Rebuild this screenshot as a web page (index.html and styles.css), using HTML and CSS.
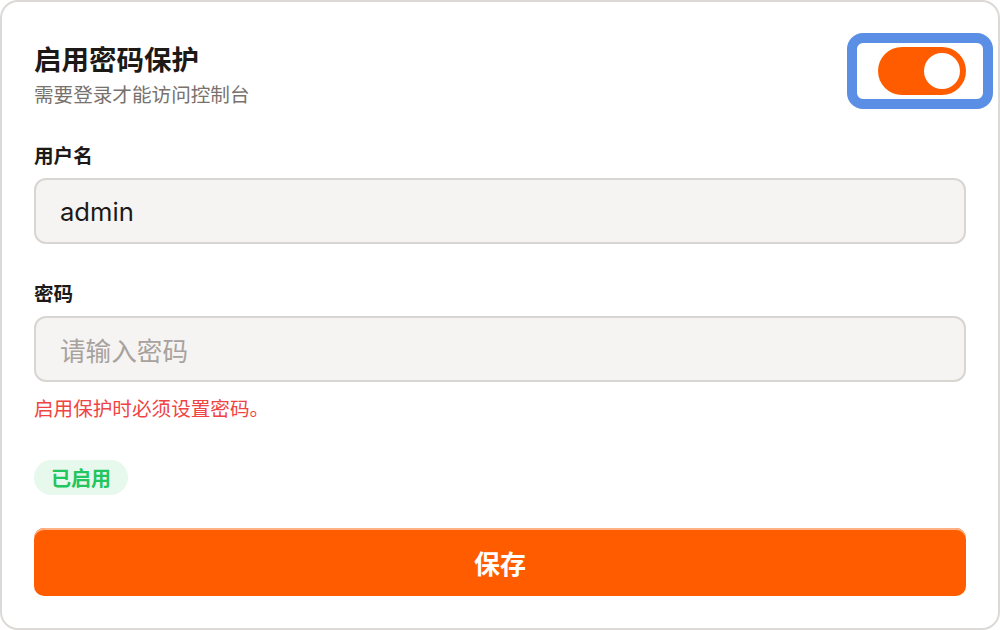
FILE: index.html
```html
<!DOCTYPE html>
<html lang="zh-CN">
<head>
<meta charset="utf-8">
<title>启用密码保护</title>
<link rel="stylesheet" href="styles.css">
</head>
<body>
<div class="card">
  <div class="header">
    <div class="heading">
      <div class="title">启用密码保护</div>
      <div class="subtitle">需要登录才能访问控制台</div>
    </div>
    <button class="toggle is-on is-focused" type="button" aria-pressed="true"><span class="knob"></span></button>
  </div>

  <div class="field field-first">
    <div class="label">用户名</div>
    <div class="input">admin</div>
  </div>

  <div class="field">
    <div class="label">密码</div>
    <div class="input placeholder">请输入密码</div>
    <div class="error">启用保护时必须设置密码。</div>
  </div>

  <div class="status"><span class="badge">已启用</span></div>

  <button class="save" type="button">保存</button>
</div>
</body>
</html>
```

FILE: styles.css
```css
* { box-sizing: border-box; }
html, body { margin: 0; padding: 0; background: #ffffff; }
body {
  font-family: "Noto Sans CJK SC", sans-serif;
  color: #1c1917;
}
.card {
  width: 1000px;
  height: 630px;
  border: 2px solid #dcd9d6;
  border-radius: 18px;
  background: #ffffff;
  padding: 36px 32px 32px 32px;
  display: flex;
  flex-direction: column;
}
.header {
  display: flex;
  justify-content: space-between;
  align-items: flex-start;
  flex: none;
}
.title {
  font-size: 27.5px;
  font-weight: 700;
  line-height: 40px;
  color: #1c1917;
}
.subtitle {
  margin-top: 2px;
  font-size: 19.6px;
  line-height: 28px;
  color: #78716c;
}
.toggle {
  position: relative;
  flex: none;
  width: 88px;
  height: 48px;
  border: none;
  border-radius: 24px;
  background: #ff5c00;
  padding: 0 6px 0 0;
  margin: 9px 0 0 0;
  display: flex;
  align-items: center;
  justify-content: flex-end;
}
.toggle .knob {
  width: 36px;
  height: 36px;
  border-radius: 50%;
  background: #ffffff;
}
.toggle.is-focused::after {
  content: "";
  position: absolute;
  top: -14px;
  bottom: -14px;
  left: -31px;
  right: -27px;
  border: 10px solid #5b8fe6;
  border-radius: 16px;
}
.field { display: flex; flex-direction: column; flex: none; }
.field-first { margin-top: 33px; }
.field + .field { margin-top: 35px; }
.label {
  font-size: 19.6px;
  font-weight: 700;
  line-height: 28px;
  color: #1c1917;
}
.input {
  margin-top: 9px;
  height: 66px;
  border: 2px solid #d8d5d2;
  border-radius: 12px;
  background: #f5f4f2;
  padding: 0 24px;
  display: flex;
  align-items: center;
  font-family: Inter, "Noto Sans CJK SC", sans-serif;
  font-size: 25.6px;
  color: #1c1917;
}
.input.placeholder { color: #a8a29e; }
.error {
  margin-top: 12px;
  font-size: 19.6px;
  line-height: 28px;
  color: #ef4444;
}
.status { margin-top: 38px; display: flex; flex: none; }
.badge {
  height: 35px;
  padding: 0 17px;
  border-radius: 18px;
  background: #e7f8ed;
  color: #22c55e;
  font-size: 20px;
  font-weight: 700;
  display: flex;
  align-items: center;
}
.save {
  flex: none;
  margin-top: 33px;
  height: 68px;
  width: 100%;
  border: none;
  border-radius: 10px;
  background: #ff5c00;
  box-shadow: inset 0 2px 0 #ffb183;
  color: #ffffff;
  font-family: "Noto Sans CJK SC", sans-serif;
  font-size: 26px;
  font-weight: 700;
  padding: 0;
}
```
